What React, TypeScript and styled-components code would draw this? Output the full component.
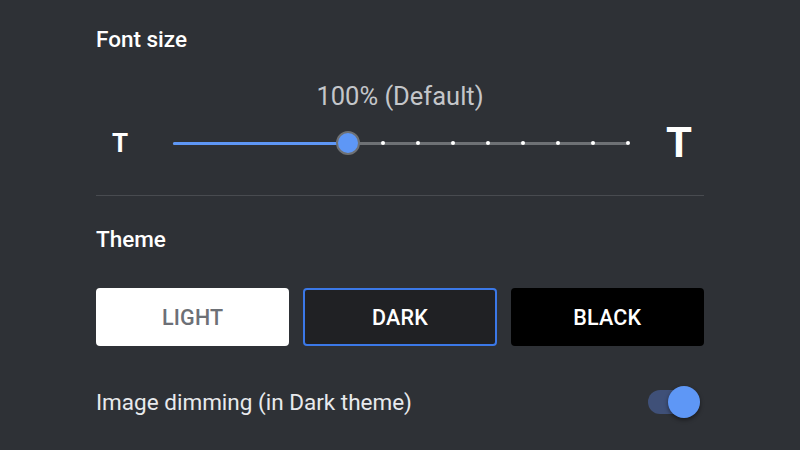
import React from "react";
import styled, { createGlobalStyle } from "styled-components";

const Global = createGlobalStyle`
  html, body { margin: 0; padding: 0; background: #2e3136; }
  body { font-family: Roboto, "Noto Sans", sans-serif; }
`;

const Page = styled.div`
  width: 800px;
  height: 450px;
  box-sizing: border-box;
  padding: 25px 96px 0 96px;
  background: #2e3136;
  color: #e8eaed;
  overflow: hidden;
`;

const Heading = styled.div`
  font-size: 22.5px;
  font-weight: 500;
  color: #ffffff;
  line-height: 28px;
`;

const SliderLabel = styled.div`
  margin-top: 27px;
  text-align: center;
  font-size: 25.5px;
  color: #c4c6ca;
  line-height: 32px;
`;

const SliderRow = styled.div`
  display: flex;
  align-items: center;
  height: 40px;
  margin-top: 11px;
`;

const SizeT = styled.span<{ $size: number; $w: number }>`
  width: ${(p) => p.$w}px;
  font-size: ${(p) => p.$size}px;
  font-weight: 700;
  color: #ffffff;
  text-align: center;
  line-height: 1;
  flex: none;
`;

const Track = styled.div`
  position: relative;
  flex: none;
  width: 455px;
  height: 3px;
  margin-left: 29px;
  margin-right: 34px;
  background: #6e7175;
  border-radius: 2px;
`;

const Fill = styled.div`
  position: absolute;
  left: 0;
  top: 0;
  height: 3px;
  background: #5e97f6;
  border-radius: 2px;
`;

const Tick = styled.div`
  position: absolute;
  top: 50%;
  width: 4px;
  height: 4px;
  margin: -2px 0 0 -2px;
  border-radius: 50%;
  background: #ffffff;
`;

const Thumb = styled.div`
  position: absolute;
  top: 50%;
  width: 20px;
  height: 20px;
  margin: -12px 0 0 -12px;
  border-radius: 50%;
  background: #5e97f6;
  border: 2px solid #6e7175;
`;

const Divider = styled.div`
  height: 1px;
  background: #484b50;
  margin-top: 32px;
`;

const ThemeHeading = styled(Heading)`
  margin-top: 29px;
`;

const ButtonRow = styled.div`
  display: grid;
  grid-template-columns: repeat(3, 1fr);
  gap: 14px;
  margin-top: 35px;
`;

const ThemeButton = styled.div<{ $bg: string; $fg: string; $border?: string }>`
  height: 58px;
  box-sizing: border-box;
  display: flex;
  align-items: center;
  justify-content: center;
  border-radius: 4px;
  background: ${(p) => p.$bg};
  color: ${(p) => p.$fg};
  border: 2px solid ${(p) => p.$border ?? p.$bg};
  font-size: 21.5px;
  font-weight: 500;
  letter-spacing: 0.2px;
`;

const ToggleRow = styled.div`
  display: flex;
  align-items: center;
  justify-content: space-between;
  margin-top: 38px;
  height: 36px;
`;

const ToggleLabel = styled.span`
  font-size: 22.5px;
  color: #e8eaed;
`;

const Switch = styled.div`
  position: relative;
  width: 42px;
  height: 24px;
  margin-right: 14px;
  border-radius: 12px;
  background: #3f5078;
`;

const Knob = styled.div`
  position: absolute;
  right: -10px;
  top: -4px;
  width: 32px;
  height: 32px;
  border-radius: 50%;
  background: #5e97f6;
  box-shadow: 0 2px 4px rgba(0, 0, 0, 0.45);
`;

const STEPS = 14;
const VALUE = 5;
const STEP_PX = 35;

export default function App() {
  const ticks = [];
  for (let i = VALUE + 1; i < STEPS; i++) {
    ticks.push(<Tick key={i} style={{ left: i * STEP_PX }} />);
  }
  return (
    <>
      <Global />
      <Page>
        <Heading>Font size</Heading>
        <SliderLabel>100% (Default)</SliderLabel>
        <SliderRow>
          <SizeT $size={26} $w={48}>T</SizeT>
          <Track>
            <Fill style={{ width: VALUE * STEP_PX }} />
            {ticks}
            <Thumb style={{ left: VALUE * STEP_PX }} />
          </Track>
          <SizeT $size={42} $w={34}>T</SizeT>
        </SliderRow>
        <Divider />
        <ThemeHeading>Theme</ThemeHeading>
        <ButtonRow>
          <ThemeButton $bg="#ffffff" $fg="#6d7076">LIGHT</ThemeButton>
          <ThemeButton $bg="#202124" $fg="#ffffff" $border="#3b78e7">DARK</ThemeButton>
          <ThemeButton $bg="#000000" $fg="#ffffff">BLACK</ThemeButton>
        </ButtonRow>
        <ToggleRow>
          <ToggleLabel>Image dimming (in Dark theme)</ToggleLabel>
          <Switch>
            <Knob />
          </Switch>
        </ToggleRow>
      </Page>
    </>
  );
}
